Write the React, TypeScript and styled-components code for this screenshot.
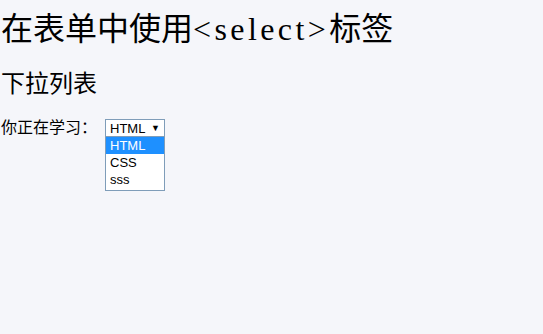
import React from "react";
import styled, { createGlobalStyle } from "styled-components";

const GlobalStyle = createGlobalStyle`
  html, body {
    margin: 0;
    padding: 0;
    background: #f5f6fa;
  }
  body {
    font-family: "Liberation Serif", "Noto Sans CJK SC", serif;
    color: #000;
  }
`;

const options = ["HTML", "CSS", "sss"];

const App: React.FC = () => {
  return (
    <>
      <GlobalStyle />
      <Page>
        <Title>
          在表单中使用<Code>&lt;select&gt;</Code>标签
        </Title>
        <SubTitle>下拉列表</SubTitle>
        <FormRow>
          <Label>你正在学习：</Label>
          <SelectWrap>
            <SelectBox>
              <span>HTML</span>
              <Arrow>▼</Arrow>
            </SelectBox>
            <DropList>
              {options.map((opt, i) => (
                <Option key={opt} $active={i === 0}>
                  {opt}
                </Option>
              ))}
            </DropList>
          </SelectWrap>
        </FormRow>
      </Page>
    </>
  );
};

export default App;

const Page = styled.div`
  display: flex;
  flex-direction: column;
  width: 543px;
  height: 334px;
  padding: 0 0 0 1px;
  box-sizing: border-box;
`;

const Title = styled.h1`
  margin: 8px 0 0 0;
  font-size: 32px;
  line-height: 36px;
  font-weight: normal;
  font-family: "Noto Sans CJK SC", sans-serif;
  white-space: nowrap;
`;

const Code = styled.span`
  font-family: "Liberation Serif", "DejaVu Serif", serif;
  font-size: 32px;
  letter-spacing: 3.4px;
`;

const SubTitle = styled.h2`
  margin: 21px 0 0 0;
  font-size: 24px;
  line-height: 28px;
  font-weight: normal;
  font-family: "Noto Sans CJK SC", sans-serif;
`;

const FormRow = styled.div`
  display: flex;
  align-items: flex-start;
  margin-top: 23px;
`;

const Label = styled.span`
  width: 104px;
  margin-top: -3px;
  font-size: 16px;
  line-height: 20px;
  font-family: "Noto Sans CJK SC", sans-serif;
`;

const SelectWrap = styled.div`
  position: relative;
  width: 60px;
`;

const SelectBox = styled.div`
  display: flex;
  align-items: center;
  justify-content: space-between;
  height: 18px;
  box-sizing: border-box;
  padding: 0 4px 0 4px;
  border: 1px solid #7f9db9;
  background: #fff;
  font-family: "Liberation Sans", Arial, sans-serif;
  font-size: 13px;
`;

const Arrow = styled.span`
  font-size: 9px;
  line-height: 1;
`;

const DropList = styled.div`
  position: absolute;
  top: 18px;
  left: 0;
  width: 60px;
  box-sizing: border-box;
  border: 1px solid #7f9db9;
  border-top: none;
  background: #fff;
  padding-bottom: 2px;
`;

const Option = styled.div<{ $active?: boolean }>`
  height: 17px;
  line-height: 17px;
  padding-left: 4px;
  font-family: "Liberation Sans", Arial, sans-serif;
  font-size: 13px;
  background: ${p => (p.$active ? "#1e90ff" : "transparent")};
  color: ${p => (p.$active ? "#fff" : "#000")};
`;
